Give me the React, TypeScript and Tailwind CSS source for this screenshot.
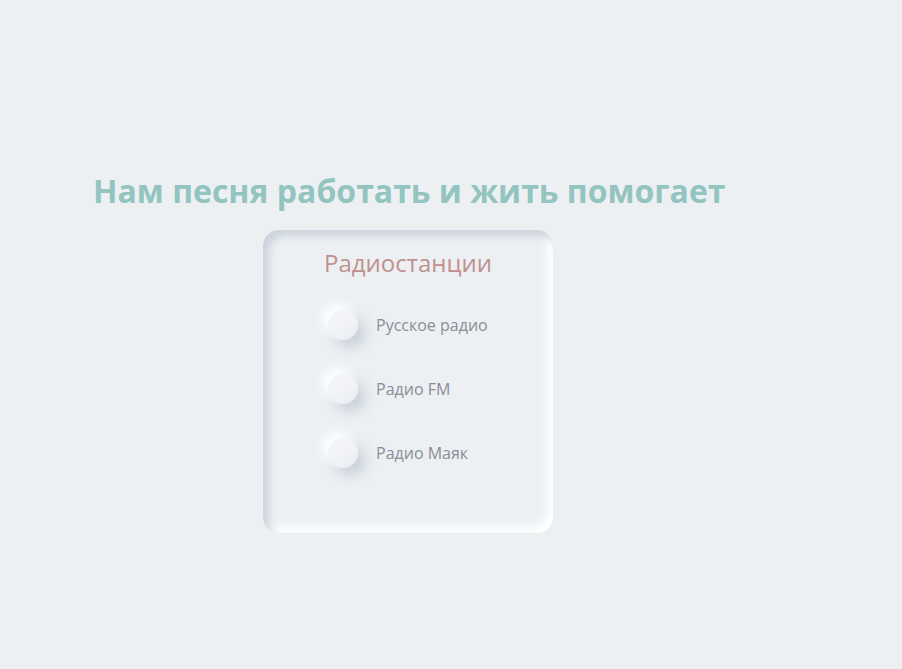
const stations = ["Русское радио", "Радио FM", "Радио Маяк"];

const App = () => {
  return (
    <div
      className="min-h-[669px] w-full bg-[#ecf0f3] pt-[169px]"
      style={{ fontFamily: '"Open Sans", sans-serif' }}
    >
      <h1 className="pl-[93px] text-[32px] font-bold leading-[43px] text-[#93c4c0]">
        Нам песня работать и жить помогает
      </h1>
      <div className="ml-[263px] mt-[18px] flex h-[303px] w-[290px] flex-col items-center rounded-[16px] bg-[#ecf0f3] pt-[16px] shadow-[inset_6px_6px_9px_#cdd3dc,inset_-6px_-6px_9px_#ffffff]">
        <h2 className="text-[24px] leading-[33px] text-[#c1908e]">Радиостанции</h2>
        <div className="mt-[31px] flex w-full flex-col gap-[34px] pl-[65px]">
          {stations.map((name) => (
            <div key={name} className="flex items-center gap-[18px]">
              <div className="h-[30px] w-[30px] shrink-0 rounded-full bg-gradient-to-br from-[#f7f8fa] to-[#eaedf1] shadow-[-6px_-6px_12px_#ffffff,7px_7px_14px_#c6cdd7]" />
              <span className="text-[16px] text-[#8c8c96]">{name}</span>
            </div>
          ))}
        </div>
      </div>
    </div>
  );
};

export default App;
